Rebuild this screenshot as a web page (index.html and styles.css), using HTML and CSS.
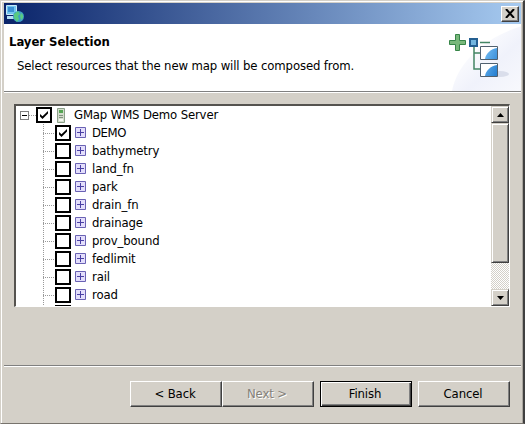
FILE: index.html
```
<!DOCTYPE html>
<html lang="en">
<head>
<meta charset="utf-8">
<title>Layer Selection</title>
<link rel="stylesheet" href="styles.css">
</head>
<body>
<svg width="0" height="0" class="defs">
  <defs>
    <symbol id="grid" viewBox="0 0 12 12"><path fill="#e3defb" stroke="#6a62b4" d="M.5.5h10v10H.5z"/><path fill="none" stroke="#4a40a4" d="M2 5.500h7M5.500 2v7"/></symbol>
    <symbol id="check" viewBox="0 0 8 8"><path d="M0 3v2.500L2.500 8 8 2.500V0L2.500 5.300z"/></symbol>
  </defs>
</svg>
<div class="window">
  <div class="titlebar">
    <svg class="app-icon" width="18" height="18" viewBox="0 0 18 18">
      <path fill="#73c6ef" stroke="#c7e9fa" d="M.5.5h10v9H.5z"/><path fill="#3c91d4" d="M2 2h6v5H2z"/>
      <path fill="#b5dff5" d="M1 11h7v3H1z"/>
      <circle cx="12.500" cy="11.500" r="5.500" fill="#3f9fc4"/>
      <path fill="#58cb82" d="m8 9 4-3 2 3-2 2 1 3-2 3-3-4zm7-1 2 2v3l-2 2-1-4z"/>
    </svg>
    <button class="close" aria-label="Close"><svg width="10" height="9" viewBox="0 0 10 9"><path d="m1 0 8 9M9 0 1 9" stroke="#000" stroke-width="2"/></svg></button>
  </div>
  <header class="header">
    <div class="heading">
      <h1>Layer Selection</h1>
      <p>Select resources that the new map will be composed from.</p>
    </div>
    <svg class="banner" width="74" height="67" viewBox="0 0 74 67">
      <defs>
        <linearGradient id="haze" x1="0" y1="0" x2="1" y2="1"><stop offset=".2" stop-color="#fff"/><stop offset=".6" stop-color="#f0f2fb"/><stop offset="1" stop-color="#f8f9fd"/></linearGradient>
        <linearGradient id="blue" x1="0" y1="0" x2="1" y2="1"><stop offset="0" stop-color="#75bdf3"/><stop offset="1" stop-color="#237dd0"/></linearGradient>
      </defs>
      <path fill="url(#haze)" d="M5 67C10 38 40 12 75 2v65z"/>
      <ellipse cx="53" cy="50" rx="9" ry="3" fill="#dadeeb"/>
      <path fill="#79b87b" stroke="#378548" d="M8.500 10.500h4v6h6v4h-6v6h-4v-6h-6v-4h6z"/>
      <path fill="none" stroke="#438564" stroke-width="1.500" d="M27 22v23h7M27 29h7M33 18.500h10"/>
      <path fill="#72b6df" stroke="#245f91" stroke-width="2" d="M23 15h7v7h-7z"/>
      <path fill="#fff" d="M34 23h16v12H34zM34 40h16v12H34z"/>
      <path fill="url(#blue)" d="M38 35c1-6 6-10 12-11v11zM38 52c1-6 6-10 12-11v11z"/>
      <path fill="none" stroke="#50606f" d="M33.500 22.500h17v13h-17zM33.500 39.500h17v13h-17z"/>
    </svg>
  </header>
  <main class="content">
    <div class="tree-box">
      <div class="tree">
        <div class="root row">
          <span class="expander"></span><span class="stub"></span>
          <span class="box"><svg width="8" height="8"><use href="#check"/></svg></span>
          <svg class="server" width="8" height="15" viewBox="0 0 8 15"><path fill="#d2ddcc" stroke="#8b9f88" d="M.5.5h7v14h-7z"/><path fill="#55a553" d="M2 2h4v3H2z"/><path stroke="#82907f" d="M2 7.500h4M2 9.500h4"/><path fill="#f4f8f1" d="M2 11h4v2H2z"/></svg>
          <span class="label root-label">GMap WMS Demo Server</span>
        </div>
        <div class="children">
          <div class="row"><span class="branch"></span><span class="box"><svg width="8" height="8"><use href="#check"/></svg></span><svg class="grid"><use href="#grid"/></svg><span class="label demo">DEMO</span></div>
          <div class="row"><span class="branch"></span><span class="box"></span><svg class="grid"><use href="#grid"/></svg><span class="label">bathymetry</span></div>
          <div class="row"><span class="branch"></span><span class="box"></span><svg class="grid"><use href="#grid"/></svg><span class="label">land_fn</span></div>
          <div class="row"><span class="branch"></span><span class="box"></span><svg class="grid"><use href="#grid"/></svg><span class="label">park</span></div>
          <div class="row"><span class="branch"></span><span class="box"></span><svg class="grid"><use href="#grid"/></svg><span class="label">drain_fn</span></div>
          <div class="row"><span class="branch"></span><span class="box"></span><svg class="grid"><use href="#grid"/></svg><span class="label">drainage</span></div>
          <div class="row"><span class="branch"></span><span class="box"></span><svg class="grid"><use href="#grid"/></svg><span class="label">prov_bound</span></div>
          <div class="row"><span class="branch"></span><span class="box"></span><svg class="grid"><use href="#grid"/></svg><span class="label">fedlimit</span></div>
          <div class="row"><span class="branch"></span><span class="box"></span><svg class="grid"><use href="#grid"/></svg><span class="label">rail</span></div>
          <div class="row"><span class="branch"></span><span class="box"></span><svg class="grid"><use href="#grid"/></svg><span class="label">road</span></div>
          <div class="row"><span class="branch"></span><span class="box"></span></div>
        </div>
      </div>
      <div class="scrollbar">
        <div class="arrow raised"><svg width="7" height="4" viewBox="0 0 7 4"><path d="M0 4h7L3.500 0z"/></svg></div>
        <div class="thumb raised"></div>
        <div class="track"></div>
        <div class="arrow raised"><svg width="7" height="4" viewBox="0 0 7 4"><path d="M0 0h7L3.500 4z"/></svg></div>
      </div>
    </div>
  </main>
  <footer class="footer">
    <button class="back">&lt; Back</button><button class="next" disabled>Next &gt;</button>
    <button class="finish">Finish</button>
    <button class="cancel">Cancel</button>
  </footer>
</div>
</body>
</html>
```
FILE: styles.css
```
* { box-sizing: border-box; }
body { margin: 0; overflow: hidden; font: 13px/18px "DejaVu Sans Condensed", "DejaVu Sans", sans-serif; font-stretch: condensed; color: #000; }
.defs { position: absolute; }
svg { display: block; flex: none; }
.window { width: 525px; height: 424px; background: #d4d0c8; border: solid; border-width: 1px 2px 1px 1px; border-color: #d4d0c8 #404040 #77736d #d4d0c8; box-shadow: inset 1px 1px #fff, inset -1px 0 #aaa69f; padding: 2px 2px 0 3px; display: flex; flex-direction: column; }
.titlebar { height: 21px; flex: none; display: flex; align-items: center; justify-content: space-between; padding: 0 2px; background: linear-gradient(90deg, #0a246a, #a6caf0); }
.close { width: 18px; height: 16px; padding: 0 0 1px; display: flex; align-items: center; justify-content: center; background: #d4d0c8; border: 1px solid; border-color: #fff #404040 #404040 #fff; box-shadow: inset -1px -1px #808080; }
.header { height: 68px; flex: none; display: flex; justify-content: space-between; background: #fff; border-bottom: 1px solid #808080; }
.heading { padding: 9px 0 0 5px; white-space: nowrap; }
h1 { margin: 0; font-size: 13px; line-height: 18px; letter-spacing: -.05px; }
p { margin: 6px 0 0 8px; letter-spacing: -.13px; }
.content { height: 273px; flex: none; border-top: 1px solid #fff; padding: 11px 11px 0 10px; }
.tree-box { height: 203px; display: flex; background: #fff; border: solid; border-width: 2px 1px 1px 2px; border-color: #55534f #fff #fff #55534f; }
.tree { flex: 1; overflow: hidden; }
.row { display: flex; align-items: center; height: 18px; }
.root { padding-left: 4px; }
.expander { width: 9px; height: 9px; border: 1px solid #808080; background: linear-gradient(#000, #000) center / 5px 1px no-repeat; }
.stub { width: 7px; height: 1px; background: repeating-linear-gradient(90deg, #999 0 1px, transparent 1px 2px); }
.box { width: 16px; height: 16px; flex: none; border: 2px solid #000; display: flex; align-items: center; justify-content: center; }
.server { margin-left: 5px; }
.label { margin-left: 5px; letter-spacing: -.12px; white-space: nowrap; }
.root-label { margin-left: 9px; letter-spacing: -.15px; }
.demo { letter-spacing: -.4px; }
.children { margin-left: 27px; background: repeating-linear-gradient(#999 0 1px, transparent 1px 2px) 0 0 / 1px 100% no-repeat; }
.branch { width: 12px; height: 1px; background: repeating-linear-gradient(90deg, #999 0 1px, transparent 1px 2px); }
.grid { width: 12px; height: 12px; margin-left: 4px; }
.scrollbar { width: 18px; display: flex; flex-direction: column; }
.raised { background: #d4d0c8; border: 1px solid; border-color: #d4d0c8 #404040 #404040 #d4d0c8; box-shadow: inset 1px 1px #fff, inset -1px -1px #808080; }
.arrow { height: 17px; display: flex; align-items: center; justify-content: center; }
.thumb { height: 140px; }
.track { flex: 1; background: repeating-conic-gradient(#fff 0 25%, #d4d0c8 0 50%) 0 0 / 2px 2px; }
.footer { flex: 1; display: flex; align-items: flex-start; border-top: 1px solid #808080; box-shadow: inset 0 1px #fff; padding: 15px 0 0 126px; }
.footer button { width: 92px; height: 26px; padding: 0 2px 1px 0; font: inherit; letter-spacing: -.12px; color: #000; background: #d4d0c8; border: 1px solid; border-color: #fff #404040 #404040 #fff; box-shadow: inset -1px -1px #808080; }
.footer .next { color: #858179; text-shadow: 1px 1px #fff; }
.footer .finish { margin: 0 6px; border-color: #000; box-shadow: inset 1px 1px #fff, inset -1px -1px #404040, inset -2px -2px #808080; }
```
